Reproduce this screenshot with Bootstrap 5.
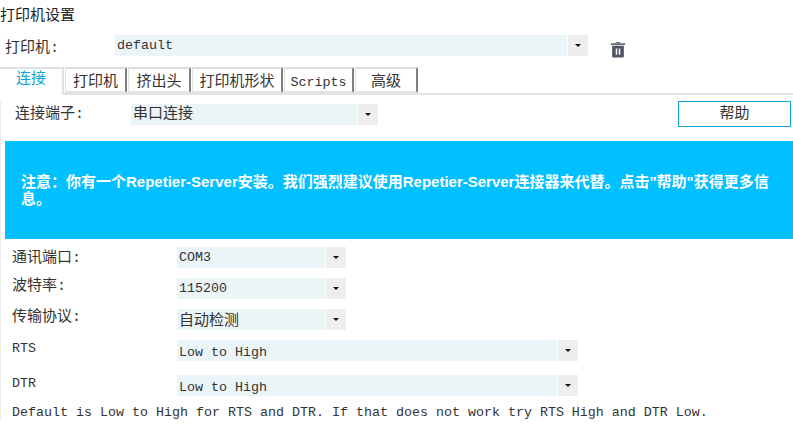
<!DOCTYPE html>
<html lang="zh-CN">
<head>
  <meta charset="UTF-8">
  <meta name="viewport" content="width=device-width, initial-scale=1.0">
  <link href="https://cdn.jsdelivr.net/npm/bootstrap@5.3.0/dist/css/bootstrap.min.css" rel="stylesheet">
  <title>打印机设置</title>
  <style>
    body {
      background: #fff;
      color: #333;
      font-family: "Liberation Mono", "Noto Sans CJK SC", monospace;
      font-size: 15px;
      overflow: hidden;
    }
    .latin { font-size: 13.33px; }
    .page-title { height: 35px; padding-top: 7px; line-height: 20px; font-size: 15px; font-weight: 400; margin: 0; color: #222; }
    .field-row { display: flex; height: 21px; }
    .field-label { line-height: 21px; white-space: nowrap; }
    .label-low { position: relative; top: 3px; }
    .label-high { position: relative; top: -2px; }
    .pick { display: flex; gap: 1px; height: 21px; }
    .pick select {
      appearance: none;
      flex: 1 1 auto;
      min-width: 0;
      height: 21px;
      border: 0;
      border-radius: 0;
      background: #ebf4f7;
      color: #333;
      padding: 0 0 0 2px;
      font: inherit;
      line-height: 21px;
      outline: 0;
    }
    .pick-wide select, .pick-cjk select { padding-top: 2px; }
    .pick-caret {
      flex: 0 0 20px;
      background: #eee;
      display: flex;
      align-items: center;
      justify-content: center;
    }
    .pick-caret::after {
      content: "";
      border-left: 3px solid transparent;
      border-right: 3px solid transparent;
      border-top: 3px solid #111;
    }
    .printer-label { width: 110px; margin-left: 5px; }
    .printer-pick { width: 473px; }
    .trash { display: block; margin: 6px 0 0 22px; }
    .tab-strip {
      --bs-nav-tabs-border-width: 0;
      flex-wrap: nowrap;
      height: 28px;
      margin-top: 11px;
      border-bottom: 2px solid #e3e3e3;
    }
    .tab-strip .nav-link {
      height: 26px;
      padding: 0;
      margin: 0 1px 0 0;
      border: 0;
      border-top: 2px solid #ddd;
      border-left: 1px solid #e3e3e3;
      border-right: 2px solid #808080;
      border-bottom: 2px solid #e3e3e3;
      border-radius: 0;
      color: #333;
      line-height: 27px;
      text-align: center;
      background: #fff;
    }
    .tab-strip .nav-link.active {
      color: #0ea5d0;
      border-left: 0;
      border-bottom: 0;
      height: 28px;
      line-height: 22px;
    }
    .tab-w1 { width: 64px; }
    .tab-w2 { width: 62px; }
    .tab-w2b { width: 63px; }
    .tab-w3 { width: 91px; }
    .tab-w4 { width: 70px; }
    .tab-w5 { width: 63px; }
    .panel { border-left: 1px solid #eee; }
    .connect-row { height: 26px; margin-top: 6px; padding-right: 2px; align-items: flex-start; }
    .connect-label { width: 130px; padding-left: 14px; margin-top: 3px; }
    .connect-pick { width: 247px; margin-top: 3px; }
    .help-btn {
      width: 113px;
      height: 26px;
      padding: 1px 0 0;
      border: 1px solid #0ea5cc;
      border-radius: 0;
      background: #fff;
      color: #333;
      font-size: 15px;
      line-height: 22px;
    }
    .notice {
      margin: 14px 0 8px 4px;
      height: 98px;
      padding: 0 16px;
      background: #00c0ff;
      color: #fff;
      font-family: "Liberation Sans", "Noto Sans CJK SC", sans-serif;
      font-weight: 700;
      font-size: 15px;
      line-height: 17px;
      display: flex;
      align-items: center;
    }
    .port-list { padding-left: 11px; }
    .port-list .field-label { width: 165px; }
    .pick-short { width: 169px; }
    .pick-wide { width: 401px; }
    .gap-10 { margin-bottom: 10px; }
    .gap-14 { margin-bottom: 14px; }
    .first-label { position: relative; top: 1px; }
    .hint { padding-left: 11px; margin: 8px 0 0; line-height: 17px; white-space: nowrap; }
  </style>
</head>
<body>
  <h1 class="page-title">打印机设置</h1>

  <!-- Printer selector -->
  <div class="field-row">
    <div class="field-label label-low printer-label">打印机:</div>
    <div class="pick latin printer-pick">
      <select aria-label="打印机"><option>default</option></select>
      <span class="pick-caret"></span>
    </div>
    <svg class="trash" width="16" height="17" viewBox="0 0 16 18" fill="#4f5564" aria-label="删除">
      <path d="M5.5 2.5V1.2h5v1.3h-1.2V2.3H6.7v.2z"/>
      <rect x="0.5" y="2.5" width="15" height="1.6"/>
      <path fill-rule="evenodd" d="M1.8 5h12.4v11.2c0 .8-.5 1.3-1.3 1.3H3.1c-.8 0-1.3-.5-1.3-1.3zM5.6 8v6.5h1.6V8zm3.2 0v6.5h1.6V8z"/>
    </svg>
  </div>

  <!-- Tabs -->
  <ul class="nav nav-tabs tab-strip">
    <li class="nav-item"><a class="nav-link active tab-w1" href="#">连接</a></li>
    <li class="nav-item"><a class="nav-link tab-w2" href="#">打印机</a></li>
    <li class="nav-item"><a class="nav-link tab-w2b" href="#">挤出头</a></li>
    <li class="nav-item"><a class="nav-link tab-w3" href="#">打印机形状</a></li>
    <li class="nav-item"><a class="nav-link tab-w4 latin" href="#">Scripts</a></li>
    <li class="nav-item"><a class="nav-link tab-w5" href="#">高级</a></li>
  </ul>

  <div class="panel">
    <div class="d-flex connect-row">
      <div class="field-label connect-label">连接端子:</div>
      <div class="pick connect-pick">
        <select aria-label="连接端子"><option>串口连接</option></select>
        <span class="pick-caret"></span>
      </div>
      <button type="button" class="btn help-btn ms-auto">帮助</button>
    </div>

    <div class="notice">
      <div>注意：你有一个Repetier-Server安装。我们强烈建议使用Repetier-Server连接器来代替。点击"帮助"获得更多信息。</div>
    </div>

    <div class="port-list">
      <div class="field-row gap-10">
        <div class="field-label first-label">通讯端口:</div>
        <div class="pick pick-short latin"><select aria-label="通讯端口"><option>COM3</option></select><span class="pick-caret"></span></div>
      </div>
      <div class="field-row gap-10">
        <div class="field-label label-high">波特率:</div>
        <div class="pick pick-short latin"><select aria-label="波特率"><option>115200</option></select><span class="pick-caret"></span></div>
      </div>
      <div class="field-row gap-10">
        <div class="field-label label-high">传输协议:</div>
        <div class="pick pick-short pick-cjk"><select aria-label="传输协议"><option>自动检测</option></select><span class="pick-caret"></span></div>
      </div>
      <div class="field-row gap-14">
        <div class="field-label label-high latin">RTS</div>
        <div class="pick pick-wide latin"><select aria-label="RTS"><option>Low to High</option></select><span class="pick-caret"></span></div>
      </div>
      <div class="field-row">
        <div class="field-label label-high latin">DTR</div>
        <div class="pick pick-wide latin"><select aria-label="DTR"><option>Low to High</option></select><span class="pick-caret"></span></div>
      </div>
    </div>

    <p class="hint latin">Default is Low to High for RTS and DTR. If that does not work try RTS High and DTR Low.</p>
  </div>

  <script src="https://cdn.jsdelivr.net/npm/bootstrap@5.3.0/dist/js/bootstrap.bundle.min.js"></script>
</body>
</html>
